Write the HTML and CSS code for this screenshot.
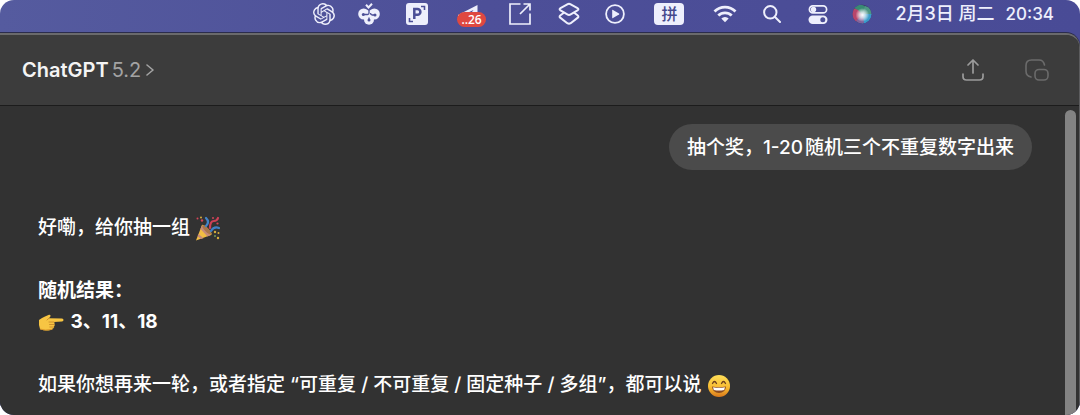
FILE: index.html
```html
<!DOCTYPE html>
<html lang="zh-CN">
<head>
<meta charset="utf-8">
<meta name="viewport" content="width=device-width, initial-scale=1">
<title>ChatGPT</title>
<link rel="stylesheet" href="styles.css">
</head>
<body>
<div class="screen">
  <header class="menubar">
    <svg class="icon w22" width="22" height="22" viewBox="0 0 24 24" fill="currentColor" aria-label="ChatGPT"><path d="M22.28 9.82a5.98 5.98 0 0 0-.52-4.91 6.05 6.05 0 0 0-6.51-2.9A6.07 6.07 0 0 0 4.98 4.18a5.98 5.98 0 0 0-4 2.9 6.05 6.05 0 0 0 .74 7.1 5.98 5.98 0 0 0 .51 4.91 6.05 6.05 0 0 0 6.51 2.9A5.98 5.98 0 0 0 13.26 24a6.06 6.06 0 0 0 5.77-4.21 5.99 5.99 0 0 0 4-2.9 6.06 6.06 0 0 0-.75-7.07zm-9.02 12.61a4.48 4.48 0 0 1-2.88-1.04l.14-.08 4.78-2.76a.8.8 0 0 0 .39-.68v-6.74l2.02 1.17a.07.07 0 0 1 .04.05v5.58a4.5 4.5 0 0 1-4.49 4.5zm-9.66-4.13a4.47 4.47 0 0 1-.53-3.01l.14.08 4.78 2.76a.77.77 0 0 0 .78 0l5.84-3.37v2.33a.08.08 0 0 1-.03.06L9.74 19.95a4.5 4.5 0 0 1-6.14-1.65zM2.34 7.9a4.49 4.49 0 0 1 2.37-1.98v5.68a.77.77 0 0 0 .38.68l5.82 3.35-2.02 1.17a.08.08 0 0 1-.07 0l-4.83-2.79A4.5 4.5 0 0 1 2.34 7.87zm16.6 3.85-5.84-3.38L15.11 7.2a.08.08 0 0 1 .07 0l4.83 2.79a4.49 4.49 0 0 1-.67 8.1v-5.68a.79.79 0 0 0-.4-.66zm2.01-3.02-.14-.09-4.77-2.78a.78.78 0 0 0-.79 0L9.41 9.23V6.9a.07.07 0 0 1 .03-.06l4.83-2.79a4.5 4.5 0 0 1 6.68 4.66zM8.31 12.86l-2.02-1.16a.08.08 0 0 1-.04-.06V6.07a4.5 4.5 0 0 1 7.38-3.45l-.15.08L8.7 5.46a.8.8 0 0 0-.39.68zm1.1-2.36L12 9l2.61 1.5v3L12 15l-2.6-1.5z"/></svg>
    <svg class="icon w22" width="22" height="22" viewBox="0 0 22 22" aria-hidden="true"><path d="M8 1.800 10.500 4.500 14 .8" fill="none" stroke="currentColor" stroke-width="2"/><g fill="currentColor"><circle cx="5.700" cy="11" r="5.500"/><circle cx="16.300" cy="11" r="5.500"/><circle cx="11" cy="16.800" r="5"/><path d="M7 7.500h8v8H7z"/></g><g fill="none" stroke="#4c4f97" stroke-width="1.300"><path d="M5.500 11.500h4q1.500 0 1.500-1.500V7M17 12h-3q-1.500-.5-1.500-2M11 17v-2.500"/></g><g fill="#4c4f97"><circle cx="5.300" cy="11.500" r="1.500"/><circle cx="17" cy="12" r="1.500"/><circle cx="11" cy="17" r="1.500"/></g></svg>
    <svg class="icon w28" width="22" height="22" viewBox="0 0 22 22" aria-hidden="true"><rect width="22" height="22" rx="3" fill="currentColor"/><g fill="none" stroke="#4c4f97"><path d="M15 3.500h3.500V7M3.500 15v3.500H7" stroke-width="1.600"/><path d="M8.300 16V6h3.200a2.900 2.900 0 0 1 0 5.800H8.300" stroke-width="2.500"/></g></svg>
    <div class="flag w30">
      <svg width="24" height="20" viewBox="0 0 24 20" aria-hidden="true"><path d="M1 11 20.500 1v13H1z" fill="currentColor"/><path d="m7 10.500 9.500-4.500-3.500 4.500z" fill="#4c4f97"/></svg>
      <span class="badge">..26</span>
    </div>
    <svg class="icon w26" width="22" height="22" viewBox="0 0 22 22" fill="none" stroke="currentColor" stroke-width="1.700" aria-hidden="true"><path d="M11.500 1H1v20h20V10.500M14.500 1H21v6.500M21 1 11 11"/></svg>
    <svg class="icon w26" width="22" height="24" viewBox="0 0 22 24" fill="none" stroke="currentColor" stroke-width="2" stroke-linejoin="round" stroke-linecap="round" aria-hidden="true"><path d="M9.300 2.300 2.500 6.200q-1.800 1.100 0 2.200l6.800 4q1.700 1 3.400 0l6.800-4q1.800-1.100 0-2.200l-6.800-3.900q-1.700-1-3.400 0z"/><path d="m5.500 11-3 2.200q-1.800 1.500 0 2.700l6.800 5.300q1.700 1 3.400 0l6.800-5.300q1.800-1.200 0-2.700L16.500 11"/></svg>
    <svg class="icon w20" width="20" height="20" viewBox="0 0 20 20" aria-hidden="true"><circle cx="10" cy="10" r="8.900" fill="none" stroke="currentColor" stroke-width="1.800"/><path d="M7.200 6.300v7.400q0 .8.800.4l6-3.600q.700-.5 0-1L8 5.900q-.8-.4-.8.400z" fill="currentColor"/></svg>
    <span class="ime w42"><span class="ime-key">拼</span></span>
    <svg class="icon w24" width="24" height="18" viewBox="0 0 24 18" fill="none" stroke="currentColor" stroke-width="2.800" aria-hidden="true"><path d="M1.500 6.500a15 15 0 0 1 21 0M5.300 10.600a9.600 9.600 0 0 1 13.400 0"/><path d="M8.300 13.500a5.300 5.300 0 0 1 7.400 0L12 17.300z" fill="currentColor" stroke="none"/></svg>
    <svg class="icon w24" width="18" height="18" viewBox="0 0 18 18" fill="none" stroke="currentColor" stroke-width="2" stroke-linecap="round" aria-hidden="true"><circle cx="7.300" cy="7.300" r="6.200"/><path d="m12 12 5 5"/></svg>
    <svg class="icon w22" width="19" height="19" viewBox="0 0 19 19" aria-hidden="true"><rect x=".9" y=".9" width="17.200" height="7" rx="3.500" fill="none" stroke="currentColor" stroke-width="1.700"/><circle cx="5" cy="4.400" r="2.700" fill="currentColor"/><rect y="10.500" width="19" height="8.500" rx="4.200" fill="currentColor"/><circle cx="14.300" cy="14.700" r="2.500" fill="#4c4f97"/></svg>
    <svg class="icon w20" width="20" height="20" viewBox="0 0 20 20" aria-label="Siri"><defs><radialGradient id="core" cx=".52" cy=".55" r=".36"><stop offset="0" stop-color="#fff"/><stop offset=".4" stop-color="#e8f0f5" stop-opacity=".8"/><stop offset="1" stop-color="#fff" stop-opacity="0"/></radialGradient><clipPath id="orb"><circle cx="10" cy="10" r="9.500"/></clipPath></defs><g clip-path="url(#orb)"><path fill="#3c4270" d="M0 0h20v20H0z"/><path d="M1 3Q8-2 14 3l-3 8z" fill="#398a73"/><path d="M0 5q5-2 10 6L4 18Q-2 14 0 5z" fill="#b8456b"/><path d="M13 2q7 2 7 9l-10-1z" fill="#4d9684"/><path d="M20 10q-1 9-10 10l1-10z" fill="#3a9ccb"/><path d="M4 17q4 4 8 2l-1-9z" fill="#82629b"/></g><circle cx="10" cy="10" r="9.500" fill="url(#core)"/></svg>
    <time class="clock"><span class="date">2月3日 周二</span><span>20:34</span></time>
  </header>

  <main class="window">
    <div class="toolbar">
      <button class="model" type="button"><span class="model-name">ChatGPT</span><span class="model-version">5.2</span><svg class="chevron" width="8" height="12" viewBox="0 0 8 12" fill="none" stroke="currentColor" stroke-width="1.600" stroke-linecap="round" stroke-linejoin="round" aria-hidden="true"><path d="m1 1 6 5-6 5"/></svg></button>
      <div class="actions">
        <button class="tool" type="button" aria-label="分享"><svg width="22" height="22" viewBox="0 0 22 22" fill="none" stroke="currentColor" stroke-width="1.700" stroke-linecap="round" stroke-linejoin="round"><path d="M11 14V1.500M6 6l5-5 5 5M1 15v2.500Q1 21 4.500 21h13q3.500 0 3.500-3.500V15"/></svg></button>
        <button class="tool tool-dim" type="button" aria-label="小窗口"><svg width="24" height="22" viewBox="0 0 24 22" fill="none" stroke="currentColor" stroke-width="1.600" stroke-linecap="round"><path d="M6 18Q1 17 1 12V6.500Q1 1 6.500 1H14q4.500 0 5.500 5"/><rect x="10" y="10.500" width="13" height="10.500" rx="4"/></svg></button>
      </div>
    </div>
    <div class="chat">
      <p class="bubble">抽个奖，<span class="range">1-20</span>随机三个不重复数字出来</p>
      <article class="reply">
        <p>好嘞，给你抽一组 <svg class="emoji" width="26" height="26" viewBox="0 0 26 26" role="img" aria-label="庆祝"><path d="m1 24.500 6-15.500q1-1 3.500 1.500l5 5q2 2.500.5 3.500z" fill="#f2bd43"/><path d="m5.500 13 7 7.500 3-1.300-8.700-9.800zM3.500 18l5 4.200-2.500.900-3.500-2.900z" fill="#c58a7a"/><ellipse cx="11.700" cy="13.700" rx="2" ry="6.200" transform="rotate(-43 11.700 13.700)" fill="#a8764a"/><g fill="none" stroke-linecap="round"><path d="M11 10q4-4 0-8" stroke="#4384c9" stroke-width="2.300"/><path d="M15 12q0-7 4-7 3 0 4-3" stroke="#ce4057" stroke-width="2.200"/><path d="M16 15q3-5 8-3" stroke="#407fc4" stroke-width="2.200"/></g><g fill="#d44557"><circle cx="2.500" cy="2.500" r="1"/><circle cx="7" cy="4.500" r="1.200"/><circle cx="18" cy="2" r="1"/><circle cx="22.500" cy="7.500" r="1.100"/></g><g fill="#d8ad3c"><circle cx="6" cy="1.500" r="1"/><circle cx="20" cy="16" r="1.200"/><circle cx="23.500" cy="17" r="1"/><circle cx="23" cy="22" r="1.200"/></g><circle cx="20" cy="20" r="1" fill="#729c55"/></svg></p>
        <p class="strong">随机结果：<br><svg class="emoji hand" width="26" height="18" viewBox="0 0 26 18" role="img" aria-label="指向右"><path d="M1 6Q4 3.500 7 2.500L11 .8q2-.3 1.500 1.500L11 4.200l13 .3q1.500.2 1.500 1.500T24 7.500l-8 .5q1.200 1 .3 2.300 1 1.300-.3 2.200.3 1.800-1.500 2.300Q13 17 9 16.500q-4 0-7-1.500-1.500-4-1-9z" fill="#f7c543"/><path d="M16 8H11M16.300 10.500H11.500M15.800 13h-4M11 4.200 9 6" fill="none" stroke="#c98a2b" stroke-width=".9" stroke-linecap="round"/><path d="M2 15q5 2 12.500.3" fill="none" stroke="#dc982a" stroke-width="1"/></svg> 3、11、18</p>
        <p>如果你想再来一轮，或者指定 “可重复 / 不可重复 / 固定种子 / 多组”，都可以说 <svg class="emoji" width="24" height="24" viewBox="0 0 24 24" role="img" aria-label="笑脸"><defs><linearGradient id="face" x2="0" y2="1"><stop offset="0" stop-color="#ffdf58"/><stop offset=".6" stop-color="#f7b92f"/><stop offset="1" stop-color="#d8771b"/></linearGradient></defs><circle cx="12" cy="12" r="11" fill="url(#face)"/><path d="M5.500 9.500q2-4 4 0M14.500 9.500q2-4 4 0" fill="none" stroke="#70421e" stroke-width="1.300" stroke-linecap="round"/><path d="M5 12.500q7 1.500 14 0-.5 6.500-7 6.500t-7-6.500z" fill="#8a4a20"/><path d="M6 13.200q6 1 12 0l-.8 2.800q-5.200 1.200-10.400 0z" fill="#fff"/></svg></p>
      </article>
      <div class="scrollbar" aria-hidden="true"></div>
    </div>
  </main>
</div>
</body>
</html>
```
FILE: styles.css
```css
* { box-sizing: border-box; }

body {
  margin: 0;
  background: #fff;
  color: #fff;
  font-family: Inter, "Noto Sans CJK SC", sans-serif;
  font-size: 19px;
  font-weight: 500;
}

p { margin: 0; }

button {
  padding: 0;
  border: 0;
  background: none;
  color: inherit;
  font: inherit;
}

.screen {
  display: flex;
  flex-direction: column;
  min-height: 100vh;
  overflow: hidden;
  border-radius: 14px;
  background: linear-gradient(90deg, #555b9f, #4d4f98 45%, #494b96);
}

.menubar {
  display: flex;
  align-items: center;
  justify-content: flex-end;
  gap: 23px;
  height: 33px;
  padding: 0 26px 5px 16px;
  color: #eeeffc;
}

.menubar > * { flex: none; }

.w20 { width: 20px; }
.w22 { width: 22px; }
.w24 { width: 24px; }
.w26 { width: 26px; }
.w28 { width: 28px; }
.w30 { width: 30px; }
.w42 { width: 42px; }

.flag {
  position: relative;
  display: flex;
  justify-content: center;
}

.badge {
  position: absolute;
  top: 8px;
  left: 3px;
  padding: 0 4px;
  border-radius: 8px;
  background: #df4840;
  color: #fff;
  font-family: "Open Sans", sans-serif;
  font-size: 12px;
  font-weight: 600;
  line-height: 15px;
}

.ime {
  display: flex;
  justify-content: center;
}

.ime-key {
  padding: 0 7px;
  border-radius: 4px;
  background: #eeeffc;
  color: #45488c;
  font-size: 16px;
  line-height: 22px;
}

.clock {
  display: flex;
  gap: 11px;
  font-size: 17px;
  line-height: 26px;
}

.date { font-size: 18px; }

.window {
  flex: 1;
  display: flex;
  flex-direction: column;
  overflow: hidden;
  border-top: 2px solid #6a6a6c;
  border-right: 1px solid #5c5c5e;
  border-top-right-radius: 14px;
  background: #323232;
  box-shadow: 0 -1px 0 #2b2c4c;
}

.toolbar {
  display: flex;
  align-items: center;
  justify-content: space-between;
  height: 71px;
  padding: 0 30px 0 22px;
  border-bottom: 1px solid #1c1c1c;
  background: #3c3c3c;
}

.model {
  display: flex;
  align-items: center;
  gap: 3px;
  color: #a3a3a3;
  font-size: 20px;
  line-height: 28px;
}

.model-name {
  color: #f4f4f4;
  font-weight: 600;
}

.model-version { font-weight: 400; }

.chevron { margin-left: 2px; }

.actions {
  display: flex;
  gap: 41px;
}

.tool {
  display: flex;
  color: #9b9b9b;
}

.tool-dim { color: #6b6b6b; }

.chat {
  position: relative;
  flex: 1;
  display: flex;
  flex-direction: column;
  padding: 18px 47px 14px 38px;
}

.bubble {
  align-self: flex-end;
  padding: 9px 18px 7px;
  border-radius: 23px;
  background: #4b4b4b;
  line-height: 30px;
}

.range { margin-right: 2px; }

.reply {
  display: flex;
  flex-direction: column;
  gap: 32px;
  margin-top: 42px;
  line-height: 31px;
}

.strong { font-weight: 700; }

.emoji { vertical-align: middle; }

.hand { margin-right: 2px; }

.scrollbar {
  position: absolute;
  top: 4px;
  right: 3px;
  bottom: 0;
  width: 11px;
  border-radius: 6px 6px 0 0;
  background: #838383;
}
```
